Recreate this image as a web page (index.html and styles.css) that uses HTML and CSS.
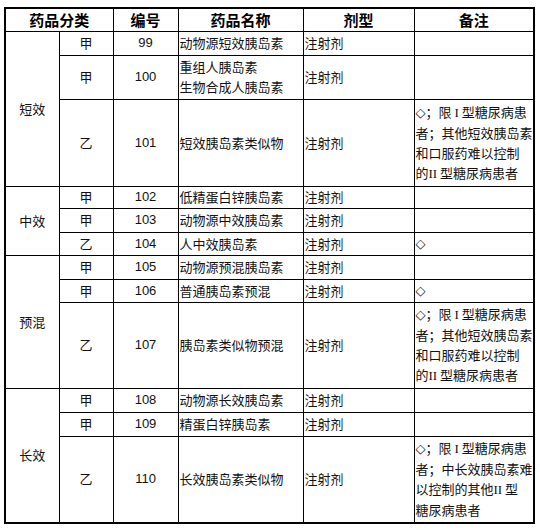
FILE: index.html
```html
<!DOCTYPE html>
<html lang="zh-CN">
<head>
<meta charset="utf-8">
<link rel="stylesheet" href="styles.css">
</head>
<body>
<table class="drug-table">
  <colgroup>
    <col class="c-cat"><col class="c-grade"><col class="c-no"><col class="c-name"><col class="c-form"><col class="c-note">
  </colgroup>
  <thead>
    <tr class="h-head">
      <th colspan="2">药品分类</th>
      <th>编号</th>
      <th>药品名称</th>
      <th>剂型</th>
      <th>备注</th>
    </tr>
  </thead>
  <tbody>
    <tr class="h24">
      <td class="ctr" rowspan="3">短效</td>
      <td class="ctr">甲</td>
      <td class="num">99</td>
      <td class="txt">动物源短效胰岛素</td>
      <td class="txt">注射剂</td>
      <td class="txt"></td>
    </tr>
    <tr class="h44">
      <td class="ctr">甲</td>
      <td class="num">100</td>
      <td class="txt two">重组人胰岛素<br>生物合成人胰岛素</td>
      <td class="txt">注射剂</td>
      <td class="txt"></td>
    </tr>
    <tr class="h87">
      <td class="ctr">乙</td>
      <td class="num">101</td>
      <td class="txt">短效胰岛素类似物</td>
      <td class="txt">注射剂</td>
      <td class="txt note"><span class="dia">◇</span>；限 <span class="rn">I</span> 型糖尿病患<br>者；其他短效胰岛素<br>和口服药难以控制<br>的<span class="rn">II</span> 型糖尿病患者</td>
    </tr>
    <tr class="h22">
      <td class="ctr" rowspan="3">中效</td>
      <td class="ctr">甲</td>
      <td class="num">102</td>
      <td class="txt">低精蛋白锌胰岛素</td>
      <td class="txt">注射剂</td>
      <td class="txt"></td>
    </tr>
    <tr class="h24">
      <td class="ctr">甲</td>
      <td class="num">103</td>
      <td class="txt">动物源中效胰岛素</td>
      <td class="txt">注射剂</td>
      <td class="txt"></td>
    </tr>
    <tr class="h23">
      <td class="ctr">乙</td>
      <td class="num">104</td>
      <td class="txt">人中效胰岛素</td>
      <td class="txt">注射剂</td>
      <td class="txt"><span class="dia">◇</span></td>
    </tr>
    <tr class="h24">
      <td class="ctr" rowspan="3">预混</td>
      <td class="ctr">甲</td>
      <td class="num">105</td>
      <td class="txt">动物源预混胰岛素</td>
      <td class="txt">注射剂</td>
      <td class="txt"></td>
    </tr>
    <tr class="h23">
      <td class="ctr">甲</td>
      <td class="num">106</td>
      <td class="txt">普通胰岛素预混</td>
      <td class="txt">注射剂</td>
      <td class="txt"><span class="dia">◇</span></td>
    </tr>
    <tr class="h86">
      <td class="ctr">乙</td>
      <td class="num">107</td>
      <td class="txt">胰岛素类似物预混</td>
      <td class="txt">注射剂</td>
      <td class="txt note"><span class="dia">◇</span>；限 <span class="rn">I</span> 型糖尿病患<br>者；其他短效胰岛素<br>和口服药难以控制<br>的<span class="rn">II</span> 型糖尿病患者</td>
    </tr>
    <tr class="h24">
      <td class="ctr" rowspan="3">长效</td>
      <td class="ctr">甲</td>
      <td class="num">108</td>
      <td class="txt">动物源长效胰岛素</td>
      <td class="txt">注射剂</td>
      <td class="txt"></td>
    </tr>
    <tr class="h24">
      <td class="ctr">甲</td>
      <td class="num">109</td>
      <td class="txt">精蛋白锌胰岛素</td>
      <td class="txt">注射剂</td>
      <td class="txt"></td>
    </tr>
    <tr class="h87">
      <td class="ctr">乙</td>
      <td class="num">110</td>
      <td class="txt">长效胰岛素类似物</td>
      <td class="txt">注射剂</td>
      <td class="txt note"><span class="dia">◇</span>；限 <span class="rn">I</span> 型糖尿病患<br>者；中长效胰岛素难<br>以控制的其他<span class="rn">II</span> 型<br>糖尿病患者</td>
    </tr>
  </tbody>
</table>
</body>
</html>
```

FILE: styles.css
```css
html, body {
  margin: 0;
  padding: 0;
  background: #fff;
}

body {
  padding: 7px 0 0 4px;
  font-family: "Noto Sans CJK SC", "Noto Sans", sans-serif;
  color: #111;
}

.drug-table {
  border-collapse: collapse;
  border: 2px solid #000;
  table-layout: fixed;
  width: 531px;
}

.c-cat { width: 54px; }
.c-grade { width: 54px; }
.c-no { width: 65px; }
.c-name { width: 125px; }
.c-form { width: 111px; }
.c-note { width: 120px; }

.drug-table th,
.drug-table td {
  border: 1px solid #000;
  padding: 0;
  font-size: 13px;
  line-height: 20px;
  vertical-align: middle;
  white-space: nowrap;
  overflow: hidden;
}

.drug-table th {
  font-size: 15px;
  font-weight: 700;
  text-align: center;
  color: #000;
}

.h-head { height: 23px; }
.h22 { height: 22px; }
.h23 { height: 23px; }
.h24 { height: 24px; }
.h44 { height: 44px; }
.h86 { height: 86px; }
.h87 { height: 87px; }

.ctr {
  text-align: center;
}

.num {
  text-align: center;
  font-family: "Liberation Sans", Arial, sans-serif;
  font-size: 12px;
}

.txt {
  text-align: left;
  padding-left: 1px !important;
}

.two {
  line-height: 22px;
}

.note {
  line-height: 21px;
  letter-spacing: 0;
}

.dia {
  font-family: "DejaVu Sans", sans-serif;
  font-size: 13px;
  color: #111;
}

.rn {
  font-family: "Liberation Serif", serif;
  font-size: 13px;
}
```
